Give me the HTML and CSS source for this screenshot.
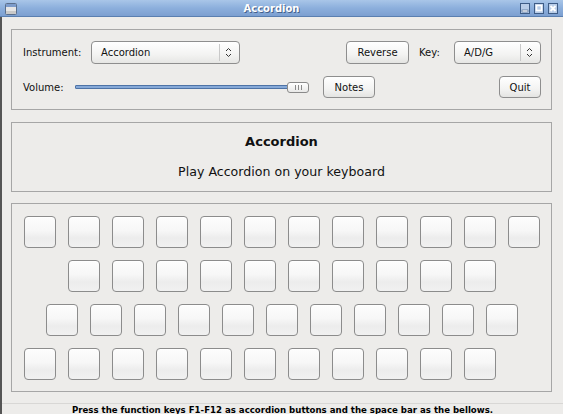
FILE: index.html
```html
<!DOCTYPE html>
<html>
<head>
<meta charset="utf-8">
<link rel="stylesheet" href="styles.css">
</head>
<body>
<div class="window">
  <div class="titlebar">
    <svg class="winicon" width="12" height="12" viewBox="0 0 12 12">
      <rect x="0.5" y="0.5" width="11" height="11" rx="1" fill="#e6e6e6" stroke="#5a6f8c"/>
      <rect x="1" y="1" width="10" height="3" fill="#7d9ccb"/>
      <rect x="1" y="8" width="10" height="3" fill="#c9c9c9"/>
    </svg>
    <div class="title">Accordion</div>
    <div class="tbuttons">
      <svg width="10" height="11" viewBox="0 0 10 11">
        <rect x="0.5" y="0.5" width="9" height="10" fill="#b9cde8" stroke="#3e5c86"/>
        <rect x="2" y="7" width="6" height="2" fill="#fff" stroke="#3e5c86" stroke-width="0.6"/>
      </svg>
      <svg width="10" height="11" viewBox="0 0 10 11">
        <rect x="0.5" y="0.5" width="9" height="10" fill="#b9cde8" stroke="#3e5c86"/>
        <rect x="2.5" y="2.5" width="5" height="5" fill="none" stroke="#fff" stroke-width="1.6"/>
      </svg>
      <svg width="10" height="11" viewBox="0 0 10 11">
        <rect x="0.5" y="0.5" width="9" height="10" fill="#b9cde8" stroke="#3e5c86"/>
        <path d="M2.5 3 L7.5 8 M7.5 3 L2.5 8" stroke="#fff" stroke-width="1.8"/>
      </svg>
    </div>
  </div>
  <div class="client">
    <div class="group controls">
      <div class="row row1">
        <span class="label lbl-instr">Instrument:</span>
        <div class="combo combo-instr">
          <span class="combo-text">Accordion</span>
          <span class="combo-sep"></span>
          <svg class="chev" width="7" height="11" viewBox="0 0 7 11"><path d="M1 4 L3.5 1.5 L6 4 M1 7 L3.5 9.5 L6 7" fill="none" stroke="#333" stroke-width="1"/></svg>
        </div>
        <span class="spacer"></span>
        <div class="btn btn-reverse">Reverse</div>
        <span class="label lbl-key">Key:</span>
        <div class="combo combo-key">
          <span class="combo-text">A/D/G</span>
          <span class="combo-sep"></span>
          <svg class="chev" width="7" height="11" viewBox="0 0 7 11"><path d="M1 4 L3.5 1.5 L6 4 M1 7 L3.5 9.5 L6 7" fill="none" stroke="#333" stroke-width="1"/></svg>
        </div>
      </div>
      <div class="row row2">
        <span class="label lbl-vol">Volume:</span>
        <div class="slider">
          <div class="groove"></div>
          <div class="handle"><span></span><span></span><span></span></div>
        </div>
        <div class="btn btn-notes">Notes</div>
        <span class="spacer"></span>
        <div class="btn btn-quit">Quit</div>
      </div>
    </div>
    <div class="group info">
      <div class="heading">Accordion</div>
      <div class="sub">Play Accordion on your keyboard</div>
    </div>
    <div class="group keys">
      <div class="krow">
        <div class="key"></div><div class="key"></div><div class="key"></div><div class="key"></div><div class="key"></div><div class="key"></div><div class="key"></div><div class="key"></div><div class="key"></div><div class="key"></div><div class="key"></div><div class="key"></div>
      </div>
      <div class="krow off2">
        <div class="key"></div><div class="key"></div><div class="key"></div><div class="key"></div><div class="key"></div><div class="key"></div><div class="key"></div><div class="key"></div><div class="key"></div><div class="key"></div>
      </div>
      <div class="krow off1">
        <div class="key"></div><div class="key"></div><div class="key"></div><div class="key"></div><div class="key"></div><div class="key"></div><div class="key"></div><div class="key"></div><div class="key"></div><div class="key"></div><div class="key"></div>
      </div>
      <div class="krow">
        <div class="key"></div><div class="key"></div><div class="key"></div><div class="key"></div><div class="key"></div><div class="key"></div><div class="key"></div><div class="key"></div><div class="key"></div><div class="key"></div><div class="key"></div>
      </div>
    </div>
    <div class="status">Press the function keys F1-F12 as accordion buttons and the space bar as the bellows.</div>
  </div>
</div>
</body>
</html>
```
FILE: styles.css
```css
html, body {
  margin: 0;
  padding: 0;
}
body {
  width: 563px;
  height: 414px;
  overflow: hidden;
  background: #edecea;
  font-family: "DejaVu Sans", sans-serif;
  font-size: 10px;
  color: #111;
}
.window {
  display: flex;
  flex-direction: column;
  height: 414px;
}
.titlebar {
  height: 17px;
  flex: none;
  display: flex;
  align-items: center;
  position: relative;
  background: linear-gradient(#a9c6e8, #8cafdc 50%, #7c9fd0);
  border-bottom: 1px solid #5a7fb0;
  box-sizing: border-box;
}
.winicon {
  margin-left: 5px;
  margin-top: 1px;
}
.title {
  flex: 1;
  text-align: center;
  font-weight: bold;
  font-size: 10px;
  color: #fff;
  text-shadow: 1px 1px 0 #44608a;
  margin-left: 6px;
}
.tbuttons {
  display: flex;
  gap: 4px;
  margin-right: 5px;
}
.tbuttons svg {
  display: block;
}
.client {
  flex: 1;
  display: flex;
  flex-direction: column;
  border-left: 2px solid #555;
}
.group {
  border: 1px solid #a6a6a6;
  margin-left: 9px;
  margin-right: 11px;
  box-sizing: border-box;
}
.controls {
  margin-top: 12px;
  height: 81px;
  padding: 11px 10px 0 11px;
  display: flex;
  flex-direction: column;
  gap: 12px;
}
.row {
  display: flex;
  align-items: center;
}
.row1 { height: 23px; }
.row2 { height: 22px; }
.spacer { flex: 1; }
.label { white-space: nowrap; }
.lbl-instr { width: 68px; }
.lbl-key { width: 35px; margin-left: 10px; }
.lbl-vol { width: 52px; }
.combo {
  height: 23px;
  box-sizing: border-box;
  border: 1px solid #8e8e8e;
  border-radius: 4px;
  background: linear-gradient(#ffffff, #f3f3f2 60%, #e6e6e4);
  display: flex;
  align-items: center;
}
.combo-instr { width: 149px; }
.combo-key { width: 87px; }
.combo-text {
  flex: 1;
  padding-left: 9px;
}
.combo-sep {
  width: 1px;
  height: 17px;
  background: #c9c9c9;
  margin-right: 5px;
}
.chev {
  margin-right: 7px;
}
.btn {
  box-sizing: border-box;
  border: 1px solid #8e8e8e;
  border-radius: 4px;
  background: linear-gradient(#ffffff, #f3f3f2 60%, #e4e4e2);
  display: flex;
  align-items: center;
  justify-content: center;
}
.btn-reverse { width: 63px; height: 23px; }
.btn-notes { width: 52px; height: 22px; margin-left: 14px; }
.btn-quit { width: 42px; height: 22px; }
.slider {
  width: 234px;
  height: 11px;
  display: flex;
  align-items: center;
}
.groove {
  flex: 1;
  height: 4px;
  box-sizing: border-box;
  border: 1px solid #4e73a6;
  background: #86a9d8;
  border-radius: 1px;
}
.handle {
  width: 22px;
  height: 11px;
  box-sizing: border-box;
  border: 1px solid #8a8a8a;
  border-radius: 3px;
  background: linear-gradient(#ffffff, #e9e9e8);
  display: flex;
  justify-content: center;
  align-items: center;
  gap: 2px;
  margin-left: -1px;
}
.handle span {
  width: 1px;
  height: 5px;
  background: #8a8a8a;
}
.info {
  margin-top: 12px;
  height: 70px;
  padding-top: 9px;
  text-align: center;
}
.heading {
  font-weight: bold;
  font-size: 13px;
  line-height: 20px;
}
.sub {
  font-size: 12.6px;
  line-height: 20px;
  margin-top: 10px;
}
.keys {
  margin-top: 11px;
  height: 189px;
  padding: 12px 0 0 12px;
  display: flex;
  flex-direction: column;
  gap: 12px;
}
.krow {
  display: flex;
  gap: 12px;
}
.off1 { padding-left: 22px; }
.off2 { padding-left: 44px; }
.key {
  width: 32px;
  height: 32px;
  box-sizing: border-box;
  border: 1px solid #8c8c8c;
  border-radius: 4px;
  background: linear-gradient(#fdfdfd, #f7f7f7 45%, #ececec 70%, #f1f1f1);
  box-shadow: inset 0 1px 0 #fff;
}
.status {
  margin-top: 11px;
  border-top: 1px solid #d8d7d5;
  flex: 1;
  text-align: center;
  font-weight: bold;
  font-size: 8.6px;
  line-height: 12px;
  color: #000;
}
```
